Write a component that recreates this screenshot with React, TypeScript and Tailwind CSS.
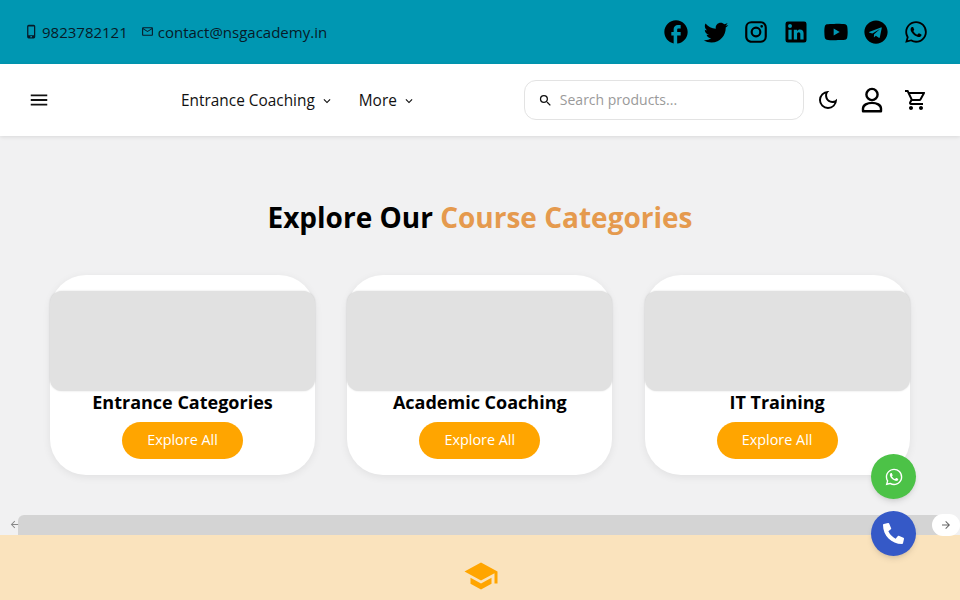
import React from "react";
import {
  MdFacebook,
  MdWhatsapp,
  MdMenu,
  MdKeyboardArrowDown,
  MdSearch,
  MdOutlineDarkMode,
  MdOutlineShoppingCart,
  MdPhoneIphone,
  MdMailOutline,
  MdSchool,
  MdArrowForward,
  MdArrowBack,
} from "react-icons/md";
import { FaTelegram, FaPhoneAlt } from "react-icons/fa";

const Glyph = ({ d, className }: { d: string; className?: string }) => (
  <svg viewBox="0 0 24 24" className={className ?? "w-[28px] h-[28px] fill-black"}>
    <path d={d} />
  </svg>
);

const twitter =
  "M22.46 6c-.77.35-1.6.58-2.46.69.88-.53 1.56-1.37 1.88-2.38-.83.5-1.75.85-2.72 1.05C18.37 4.5 17.26 4 16 4c-2.35 0-4.27 1.92-4.27 4.29 0 .34.04.67.11.98C8.28 9.09 5.11 7.38 3 4.79c-.37.63-.58 1.37-.58 2.15 0 1.49.75 2.81 1.91 3.56-.71 0-1.37-.2-1.95-.5v.03c0 2.08 1.48 3.82 3.44 4.21a4.22 4.22 0 0 1-1.93.07 4.28 4.28 0 0 0 4 2.98 8.521 8.521 0 0 1-5.33 1.84c-.34 0-.68-.02-1.02-.06C3.44 20.29 5.7 21 8.12 21 16 21 20.33 14.46 20.33 8.79c0-.19 0-.37-.01-.56.84-.6 1.56-1.36 2.14-2.23z";
const instagram =
  "M7.8 2h8.4C19.4 2 22 4.6 22 7.8v8.4a5.8 5.8 0 0 1-5.8 5.8H7.8C4.6 22 2 19.4 2 16.2V7.8A5.8 5.8 0 0 1 7.8 2m-.2 2A3.6 3.6 0 0 0 4 7.6v8.8C4 18.39 5.61 20 7.6 20h8.8a3.6 3.6 0 0 0 3.6-3.6V7.6C20 5.61 18.39 4 16.4 4H7.6m9.65 1.5a1.25 1.25 0 0 1 1.25 1.25A1.25 1.25 0 0 1 17.25 8 1.25 1.25 0 0 1 16 6.75a1.25 1.25 0 0 1 1.25-1.25M12 7a5 5 0 0 1 5 5 5 5 0 0 1-5 5 5 5 0 0 1-5-5 5 5 0 0 1 5-5m0 2a3 3 0 0 0-3 3 3 3 0 0 0 3 3 3 3 0 0 0 3-3 3 3 0 0 0-3-3z";
const linkedin =
  "M19 3a2 2 0 0 1 2 2v14a2 2 0 0 1-2 2H5a2 2 0 0 1-2-2V5a2 2 0 0 1 2-2h14m-.5 15.5v-5.3a3.26 3.26 0 0 0-3.26-3.26c-.85 0-1.84.52-2.32 1.3v-1.11h-2.79v8.37h2.79v-4.93c0-.77.62-1.4 1.39-1.4a1.4 1.4 0 0 1 1.4 1.4v4.93h2.79M6.88 8.56a1.68 1.68 0 0 0 1.68-1.68c0-.93-.75-1.69-1.68-1.69a1.69 1.69 0 0 0-1.69 1.69c0 .93.76 1.68 1.69 1.68m1.39 9.94v-8.37H5.5v8.37h2.77z";
const youtube =
  "M10 15l5.19-3L10 9v6m11.56-7.83c.13.47.22 1.1.28 1.9.07.8.1 1.49.1 2.09L22 12c0 2.19-.16 3.8-.44 4.83-.25.9-.83 1.48-1.73 1.73-.47.13-1.33.22-2.65.28-1.3.07-2.49.1-3.59.1L12 19c-4.19 0-6.8-.16-7.83-.44-.9-.25-1.48-.83-1.73-1.73-.13-.47-.22-1.1-.28-1.9-.07-.8-.1-1.49-.1-2.09L2 12c0-2.19.16-3.8.44-4.83.25-.9.83-1.48 1.73-1.73.47-.13 1.33-.22 2.65-.28 1.3-.07 2.49-.1 3.59-.1L12 5c4.19 0 6.8.16 7.83.44.9.25 1.48.83 1.73 1.73z";

const categories = ["Entrance Categories", "Academic Coaching", "IT Training"];

const CategoryCard = ({ title }: { title: string }) => (
  <div className="w-[265px] h-[200px] rounded-[36px] bg-white pt-4 shadow-[0_2px_8px_rgba(0,0,0,0.07)] flex flex-col items-center">
    <div className="w-full h-[100px] rounded-xl bg-[#e1e1e1] shadow-[0_0_2px_rgba(0,0,0,0.15)]" />
    <h3 className="mt-[-1px] text-[18px] leading-[24px] font-bold text-black">{title}</h3>
    <button className="mt-[8px] w-[121px] h-[37px] pb-[1px] rounded-full bg-[#ffa500] text-white text-[14.4px]">
      Explore All
    </button>
  </div>
);

const App = () => {
  return (
    <div className="h-[600px] w-[960px] overflow-hidden relative bg-[#f1f1f2] font-['Open_Sans','Noto_Sans',sans-serif] text-black">
      {/* Top strip */}
      <div className="h-16 bg-[#0097b2] flex items-center justify-between pl-[24px] pr-[30px]">
        <div className="flex items-center text-[15px] text-[#071a28]">
          <MdPhoneIphone className="w-[15px] h-[15px] mr-[3px] mb-[2px]" />
          <span>9823782121</span>
          <MdMailOutline className="w-[13px] h-[13px] ml-[13px] mr-[4px] mb-[2px]" />
          <span>contact@nsgacademy.in</span>
        </div>
        <div className="flex items-center gap-3">
          <MdFacebook className="w-[28px] h-[28px]" />
          <Glyph d={twitter} />
          <Glyph d={instagram} className="w-[26px] h-[26px] mx-[1px] fill-black" />
          <Glyph d={linkedin} />
          <Glyph d={youtube} />
          <FaTelegram className="w-[24px] h-[24px] mx-[2px]" />
          <MdWhatsapp className="w-[26px] h-[26px] mx-[1px]" />
        </div>
      </div>

      {/* Nav */}
      <div className="relative h-[72px] bg-white shadow-[0_1px_4px_rgba(0,0,0,0.1)] flex items-center pl-[28px] pr-[30px]">
        <MdMenu className="w-[22px] h-[22px] text-[#111]" />
        <nav className="ml-[131px] mt-[2px] flex items-center text-[15.4px] font-medium text-[#111]">
          <span>Entrance Coaching</span>
          <MdKeyboardArrowDown className="w-[14px] h-[14px] ml-[5px]" />
          <span className="ml-[25px]">More</span>
          <MdKeyboardArrowDown className="w-[14px] h-[14px] ml-[5px]" />
        </nav>
        <div className="ml-[108px] w-[280px] h-[40px] rounded-xl border border-[#e3e3e3] flex items-center pl-[13px]">
          <MdSearch className="w-[15px] h-[15px] text-[#111]" />
          <span className="ml-[7px] mb-[1px] text-[14px] text-[#9a9a9a]">Search products...</span>
        </div>
        <div className="ml-[12px] flex items-center">
          <MdOutlineDarkMode className="w-[24px] h-[24px]" />
          <svg viewBox="0 0 24 26" fill="none" stroke="black" strokeWidth="2.4" className="w-[24px] h-[26px] ml-[20px]">
            <circle cx="12" cy="7.5" r="5.6" />
            <path d="M3 24.2v-2.7c0-3.6 4.4-5.6 9-5.6s9 2 9 5.6v2.7z" strokeLinejoin="round" />
          </svg>
          <MdOutlineShoppingCart className="w-[24px] h-[24px] ml-[20px]" />
        </div>
      </div>

      {/* Categories */}
      <section className="pt-[62px]">
        <h2 className="text-center text-[28px] leading-[38px] font-bold">
          Explore Our <span className="text-[#e59a4e]">Course Categories</span>
        </h2>
        <div className="mt-[39px] pl-[50px] pr-[50.4px] flex justify-between">
          {categories.map((c) => (
            <CategoryCard key={c} title={c} />
          ))}
        </div>
        <div className="mt-[40px] ml-[18px] mr-[15px] h-[20px] rounded-t-md bg-[#d4d4d4]" />
      </section>

      {/* Next section */}
      <section className="h-[65px] bg-[#fae3bd] flex justify-center pt-[23px] pl-[1px]">
        <MdSchool className="w-[36px] h-[36px] text-[#ffa500]" />
      </section>

      {/* Carousel arrows */}
      <MdArrowBack className="absolute left-[9px] top-[519px] w-[11px] h-[11px] text-[#888]" />
      <div className="absolute left-[932px] top-[514px] w-[28px] h-[22px] rounded-full bg-white flex items-center justify-center">
        <MdArrowForward className="w-[12px] h-[12px] text-[#666]" />
      </div>

      {/* Floating contact buttons */}
      <div className="absolute left-[871px] top-[454px] w-[45px] h-[45px] rounded-full bg-[#4cc247] shadow-md flex items-center justify-center">
        <MdWhatsapp className="w-[20px] h-[20px] text-white" />
      </div>
      <div className="absolute left-[871px] top-[511px] w-[45px] h-[45px] rounded-full bg-[#3559c7] shadow-md flex items-center justify-center">
        <FaPhoneAlt className="w-[21px] h-[21px] text-white" />
      </div>
    </div>
  );
};

export default App;
